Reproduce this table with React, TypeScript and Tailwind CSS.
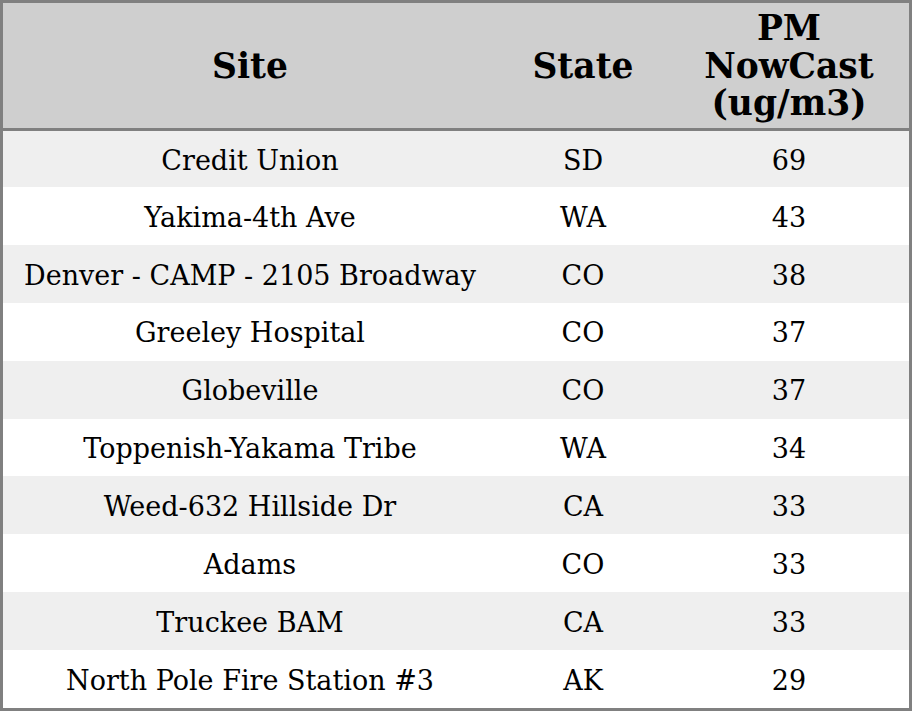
const rows = [
  { site: "Credit Union", state: "SD", pm: 69 },
  { site: "Yakima-4th Ave", state: "WA", pm: 43 },
  { site: "Denver - CAMP - 2105 Broadway", state: "CO", pm: 38 },
  { site: "Greeley Hospital", state: "CO", pm: 37 },
  { site: "Globeville", state: "CO", pm: 37 },
  { site: "Toppenish-Yakama Tribe", state: "WA", pm: 34 },
  { site: "Weed-632 Hillside Dr", state: "CA", pm: 33 },
  { site: "Adams", state: "CO", pm: 33 },
  { site: "Truckee BAM", state: "CA", pm: 33 },
  { site: "North Pole Fire Station #3", state: "AK", pm: 29 },
];

export default function App() {
  return (
    <div
      className="w-[912px] h-[711px] border-[3px] border-[#808080] bg-white text-black flex flex-col"
      style={{ fontFamily: '"DejaVu Serif", serif' }}
    >
      <div className="h-[128px] shrink-0 grid grid-cols-[494px_172px_1fr] items-center bg-[#cfcfcf] border-b-[3px] border-[#808080] text-[34.5px] font-bold leading-[37.5px] text-center pt-[2px]">
        <div>Site</div>
        <div>State</div>
        <div>
          PM
          <br />
          NowCast
          <br />
          (ug/m3)
        </div>
      </div>
      <div className="flex-1 flex flex-col">
        {rows.map((r, i) => (
          <div
            key={r.site}
            className={`grid grid-cols-[494px_172px_1fr] items-center text-center text-[27px] pt-[4px] ${
              i === 0 ? "h-[56px] shrink-0" : "flex-1"
            } ${i % 2 === 0 ? "bg-[#efefef]" : "bg-white"}`}
          >
            <div>{r.site}</div>
            <div>{r.state}</div>
            <div>{r.pm}</div>
          </div>
        ))}
      </div>
    </div>
  );
}
